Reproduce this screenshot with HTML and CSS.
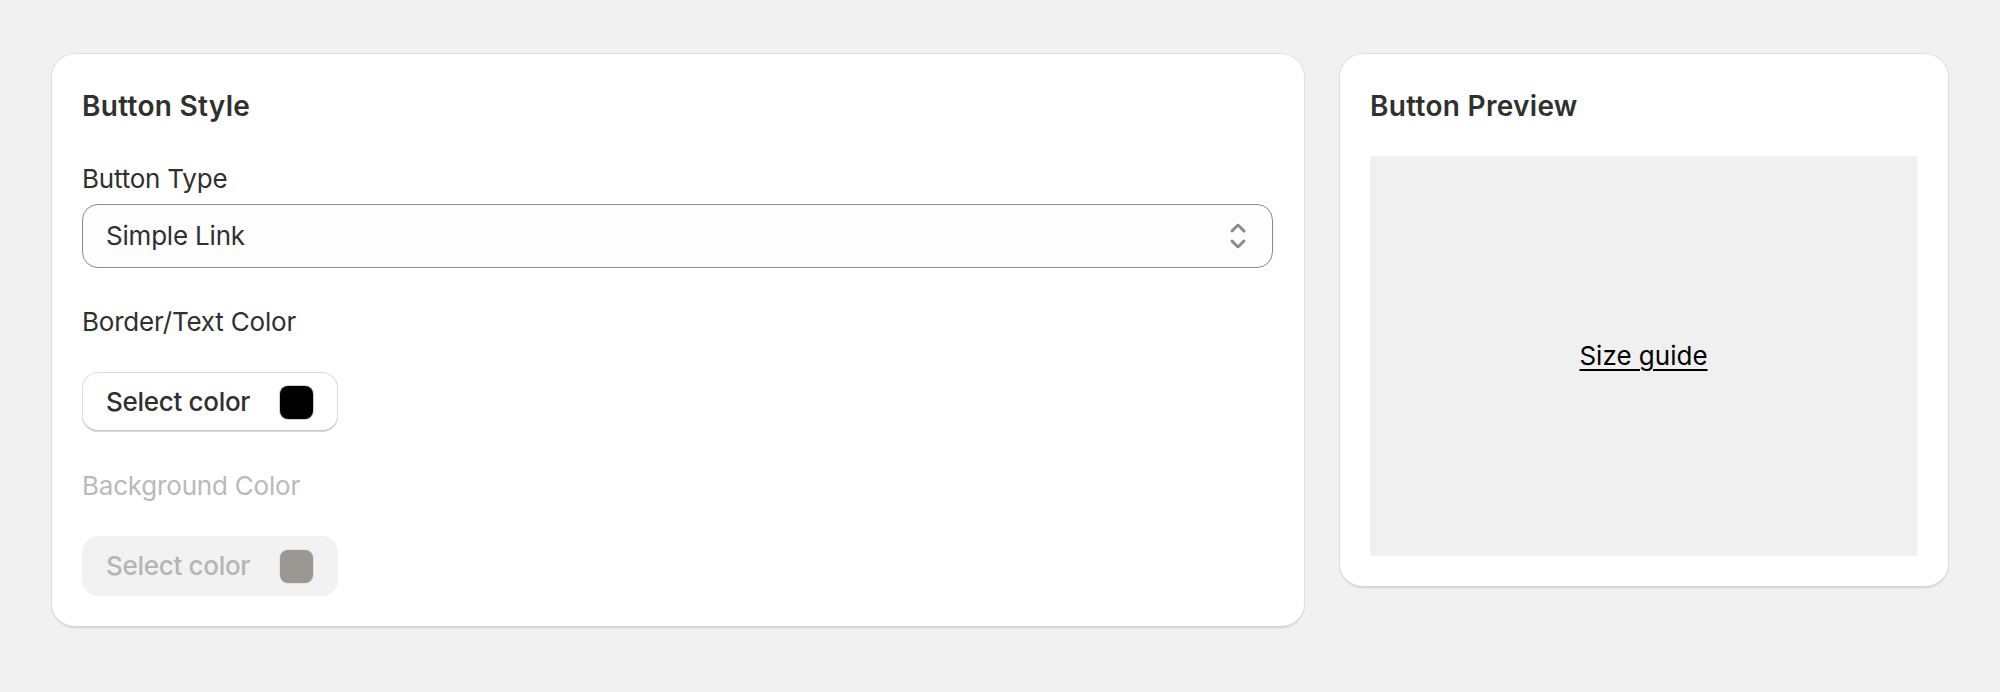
FILE: index.html
```html
<!DOCTYPE html>
<html lang="en">
<head>
<meta charset="utf-8">
<title>Button Style</title>
<link rel="stylesheet" href="styles.css">
</head>
<body>
<main class="page">
  <section class="card card-style">
    <h2 class="card-title">Button Style</h2>
    <div class="field">
      <label class="label field-label" for="btn-type">Button Type</label>
      <div class="select" id="btn-type">
        <span class="select-value">Simple Link</span>
        <svg class="select-icon" viewBox="0 0 20 20" aria-hidden="true">
          <path d="M10.884 4.323a1.25 1.25 0 0 0-1.768 0l-2.646 2.647a.75.75 0 0 0 1.06 1.06l2.47-2.47 2.47 2.47a.75.75 0 1 0 1.06-1.06l-2.646-2.647Z"/>
          <path d="m13.53 13.03-2.646 2.647a1.25 1.25 0 0 1-1.768 0l-2.646-2.647a.75.75 0 0 1 1.06-1.06l2.47 2.47 2.47-2.470a.75.75 0 0 1 1.06 1.06Z"/>
        </svg>
      </div>
    </div>
    <p class="label">Border/Text Color</p>
    <button class="color-btn" type="button">
      <span class="color-btn-text">Select color</span>
      <span class="swatch swatch-black"></span>
    </button>
    <p class="label label-disabled">Background Color</p>
    <button class="color-btn color-btn-disabled" type="button" disabled>
      <span class="color-btn-text">Select color</span>
      <span class="swatch swatch-gray"></span>
    </button>
  </section>

  <section class="card card-preview">
    <h2 class="card-title">Button Preview</h2>
    <div class="preview">
      <a class="preview-link" href="#">Size guide</a>
    </div>
  </section>
</main>
</body>
</html>
```

FILE: styles.css
```css
* {
  box-sizing: border-box;
}

html, body {
  margin: 0;
  padding: 0;
}

body {
  background: #f1f1f1;
  font-family: Inter, "Noto Sans", "Liberation Sans", sans-serif;
  color: #303030;
  min-height: 692px;
}

.page {
  display: grid;
  grid-template-columns: 1254fr 610fr;
  column-gap: 34px;
  align-items: start;
  padding: 53px 51px 0;
}

.card {
  background: #ffffff;
  border-radius: 24px;
  padding: 32px 32px 32px 31px;
  display: flex;
  flex-direction: column;
  box-shadow:
    inset 0 0 0 1px #dfdfdf,
    inset 0 -2px 0 #d2d2d2,
    0 1px 1px rgba(0, 0, 0, 0.05);
}

.card-style {
  gap: 32px;
}

.card-preview {
  gap: 31px;
}

.card-title {
  margin: 0;
  font-size: 28px;
  font-weight: 600;
  letter-spacing: 0.3px;
  line-height: 38px;
  padding-top: 2px;
  color: #303030;
}

.label {
  margin: 0;
  font-size: 26px;
  font-weight: 400;
  letter-spacing: -0.2px;
  line-height: 36px;
  padding-top: 4px;
  color: #303030;
  display: block;
}

.label-disabled {
  color: #bababa;
}

.field {
  display: flex;
  flex-direction: column;
  gap: 7px;
}

.select {
  height: 64px;
  border: 1px solid #8a8a8a;
  border-radius: 16px;
  background: #fdfdfd;
  display: flex;
  align-items: center;
  justify-content: space-between;
  padding: 0 14px 0 23px;
}

.select-value {
  font-size: 26px;
  letter-spacing: -0.2px;
  line-height: 40px;
  color: #303030;
}

.select-icon {
  width: 40px;
  height: 40px;
  fill: #8a8a8a;
}

.color-btn {
  align-self: flex-start;
  width: 256px;
  height: 60px;
  padding: 0 25px 0 24px;
  border: 0;
  border-radius: 16px;
  background: #ffffff;
  display: flex;
  align-items: center;
  justify-content: space-between;
  font-family: inherit;
  cursor: pointer;
  box-shadow:
    inset 0 0 0 1px #dcdcdc,
    inset 0 -2px 0 #c4c4c4;
}

.color-btn-text {
  font-size: 26px;
  font-weight: 500;
  letter-spacing: -0.3px;
  line-height: 40px;
  color: #303030;
}

.color-btn-disabled {
  background: #f2f2f2;
  box-shadow: none;
  cursor: default;
}

.color-btn-disabled .color-btn-text {
  color: #b5b5b5;
}

.swatch {
  width: 33px;
  height: 33px;
  border-radius: 8px;
  flex: none;
}

.swatch-black {
  background: #000000;
  box-shadow: 0 0 0 1px #cfcfcf;
}

.swatch-gray {
  background: #9a9892;
  box-shadow: 0 0 0 1px #e2e2e2;
}

.preview {
  height: 400px;
  background: #f0f0f0;
  display: flex;
  align-items: center;
  justify-content: center;
}

.preview-link {
  font-size: 26px;
  line-height: 40px;
  color: #000000;
  text-decoration: underline;
  text-decoration-thickness: 2px;
  text-underline-offset: 4px;
}
```
